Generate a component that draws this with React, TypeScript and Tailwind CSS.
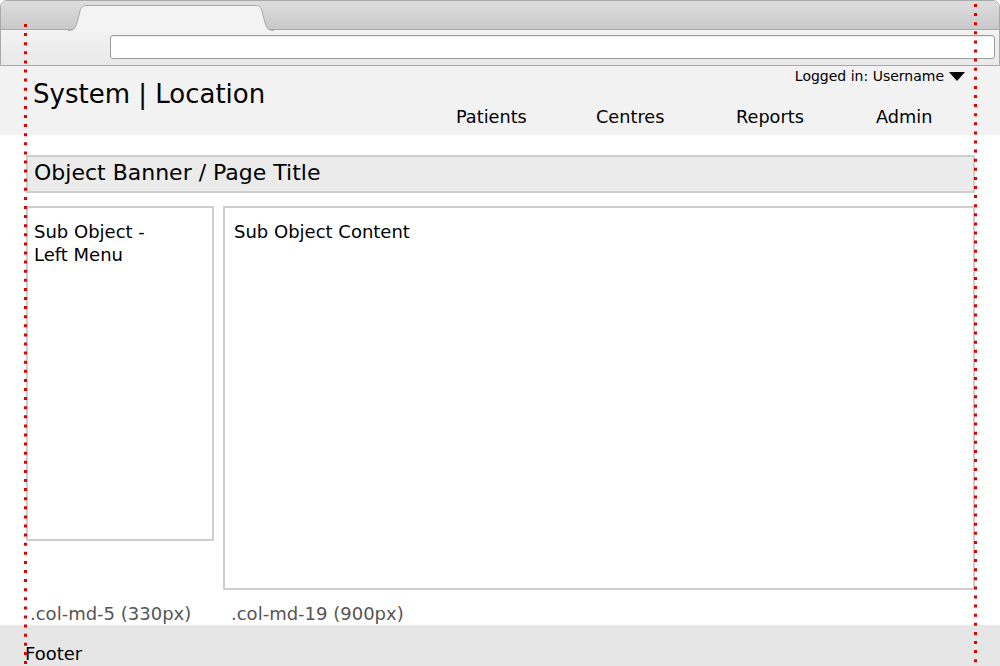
const NAV = ["Patients", "Centres", "Reports"];

function BrowserChrome() {
  return (
    <div className="h-[66px] rounded-t-[7px] border border-[#a9a9a9] bg-[#ececec]">
      <div className="relative h-[29px] rounded-t-[7px] border-b border-[#a9a9a9] bg-gradient-to-b from-[#dddddd] to-[#c9c9c9]">
        <svg className="absolute left-[67px] top-[3px]" width="206" height="27" viewBox="0 0 206 27">
          <path
            d="M0 27 C7 27 8 23 10 15 L12 7 C13 3 15 1.5 19 1.5 L187 1.5 C191 1.5 193 3 194 7 L196 15 C198 23 199 27 206 27 Z"
            fill="#f3f3f3"
          />
          <path
            d="M0 26.5 C7 26.5 8 23 10 15 L12 7 C13 3 15 1.5 19 1.5 L187 1.5 C191 1.5 193 3 194 7 L196 15 C198 23 199 26.5 206 26.5"
            fill="none"
            stroke="#a9a9a9"
          />
        </svg>
      </div>
      <div className="h-[35px] bg-gradient-to-b from-[#f2f2f2] to-[#e9e9e9] pl-[109px] pr-[4px] pt-[5px]">
        <div className="h-[24px] rounded-[3px] border border-[#9c9c9c] bg-white shadow-[inset_0_1px_1px_rgba(0,0,0,0.08)]" />
      </div>
    </div>
  );
}

function Header() {
  return (
    <div className="flex h-[69px] bg-[#f2f2f2]">
      <div className="w-[456px] pl-[33px] pt-[13px] text-[26px] leading-[31px]">System | Location</div>
      <div className="flex flex-1 flex-col pr-[35px]">
        <div className="flex items-center justify-end gap-[5px] pt-[2px] text-[14px] leading-[16px]">
          <span>Logged in: Username</span>
          <svg width="16" height="9" viewBox="0 0 16 9">
            <path d="M0 0 H16 L8 9 Z" fill="#000" />
          </svg>
        </div>
        <div className="mt-[23px] flex text-[17.7px] leading-[21px]">
          {NAV.map((n) => (
            <div key={n} className="w-[140px]">
              {n}
            </div>
          ))}
          <div>Admin</div>
        </div>
      </div>
    </div>
  );
}

function GuideLines() {
  return (
    <svg className="pointer-events-none absolute left-0 top-0" width="1000" height="666" viewBox="0 0 1000 666">
      <line x1="25.5" y1="24" x2="25.5" y2="665" stroke="#e00000" strokeWidth="3" strokeDasharray="3 6.1" />
      <line x1="975.5" y1="4" x2="975.5" y2="665" stroke="#e00000" strokeWidth="3" strokeDasharray="3 6.1" />
    </svg>
  );
}

export default function App() {
  return (
    <div className="relative h-[666px] w-[1000px] overflow-hidden bg-white font-['DejaVu_Sans',sans-serif] text-black">
      <BrowserChrome />
      <Header />
      <div className="pl-[26px] pr-[25px]">
        <div className="mt-[20px] h-[38px] border-2 border-[#cecece] bg-[#ebebeb] pl-[6px] text-[22px] leading-[31px]">
          Object Banner / Page Title
        </div>
        <div className="mt-[13px] flex items-start gap-[9px] text-[18px] leading-[23px]">
          <div className="h-[335px] w-[188px] border-2 border-[#cecece] pl-[6px] pt-[12px]">
            Sub Object -
            <br />
            Left Menu
          </div>
          <div className="h-[384px] flex-1 border-2 border-[#cecece] pl-[9px] pt-[12px]">Sub Object Content</div>
        </div>
        <div className="mt-[12px] flex pl-[4px] text-[18px] leading-[23px] text-[#555555]">
          <div className="w-[201px]">.col-md-5 (330px)</div>
          <div>.col-md-19 (900px)</div>
        </div>
      </div>
      <div className="h-[41px] border-t border-[#ececec] bg-[#e6e6e6] pl-[25px] pt-[16px] text-[18px] leading-[23px]">
        Footer
      </div>
      <GuideLines />
    </div>
  );
}
